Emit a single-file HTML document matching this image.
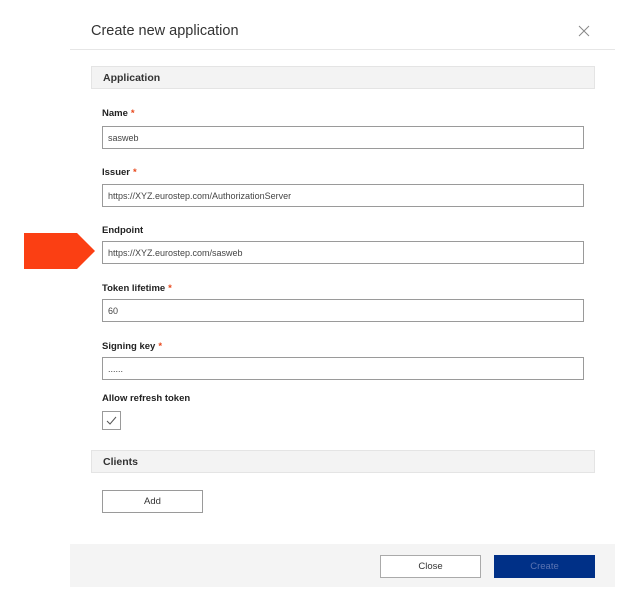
<!DOCTYPE html><html><head><style>
body{margin:0;width:638px;height:602px;background:#fff;font-family:"Liberation Sans",sans-serif;position:relative;overflow:hidden}
.a{position:absolute}
.lbl{position:absolute;left:102px;font-size:9.5px;font-weight:bold;color:#222}
.lbl b{color:#e8491d;margin-left:3px}
.inp{position:absolute;left:102px;height:21px;border:1px solid #9a9a9a;font-size:9px;color:#444;line-height:22px;padding-left:5px;box-sizing:content-box;width:475px}
.bar{position:absolute;left:91px;height:23px;background:#f3f3f3;border:1px solid #e4e4e4;font-size:10.5px;font-weight:bold;color:#333;line-height:23px;padding-left:11px;box-sizing:border-box;width:504px}
.btn{position:absolute;height:23px;width:101px;box-sizing:border-box;font-size:9.5px;text-align:center;line-height:21px}
</style></head><body>
<div class="a" style="left:91px;top:23px;font-size:14.5px;color:#333">Create new application</div>
<svg class="a" style="left:578px;top:25px" width="12" height="12"><path d="M1 1L11 11M11 1L1 11" stroke="#888" stroke-width="1"/></svg>
<div class="a" style="left:70px;top:49px;width:545px;height:1px;background:#e6e6e6"></div>
<div class="bar" style="top:66px">Application</div>
<div class="lbl" style="top:108px">Name<b>*</b></div>
<div class="inp" style="top:126px">sasweb</div>
<div class="lbl" style="top:167px">Issuer<b>*</b></div>
<div class="inp" style="top:184px">https://XYZ.eurostep.com/AuthorizationServer</div>
<div class="lbl" style="top:225px">Endpoint</div>
<div class="inp" style="top:241px">https://XYZ.eurostep.com/sasweb</div>
<div class="lbl" style="top:283px">Token lifetime<b>*</b></div>
<div class="inp" style="top:299px">60</div>
<div class="lbl" style="top:341px">Signing key<b>*</b></div>
<div class="inp" style="top:357px">......</div>
<div class="lbl" style="top:393px">Allow refresh token</div>
<div class="a" style="left:102px;top:411px;width:17px;height:17px;border:1px solid #9a9a9a"><svg width="17" height="17"><path d="M4 9l3 3 6-7" stroke="#555" fill="none" stroke-width="1"/></svg></div>
<div class="bar" style="top:450px">Clients</div>
<div class="btn" style="left:102px;top:490px;border:1px solid #9a9a9a;color:#333">Add</div>
<svg class="a" style="left:24px;top:233px" width="74" height="37"><path d="M0 0H53L71 18L53 36H0Z" fill="#fb3f13"/></svg>
<div class="a" style="left:70px;top:544px;width:545px;height:43px;background:#f4f4f4"></div>
<div class="btn" style="left:380px;top:555px;background:#fff;border:1px solid #aaa;color:#333">Close</div>
<div class="btn" style="left:494px;top:555px;background:#003087;color:#5b74b2;line-height:23px">Create</div>
</body></html>
